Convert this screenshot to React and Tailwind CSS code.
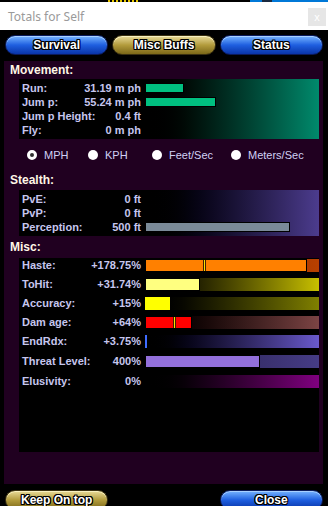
import React from 'react'

const FONT = "font-['Liberation_Sans',Arial,sans-serif]"
const OUTLINE = '[text-shadow:1px_0_0_#000,-1px_0_0_#000,0_1px_0_#000,0_-1px_0_#000,1px_1px_0_#000,-1px_-1px_0_#000,1px_-1px_0_#000,-1px_1px_0_#000]'

function GlossButton({ label, gold }) {
  return (
    <div
      className={`h-[20px] rounded-full border flex items-center justify-center text-[12px] font-bold text-white ${OUTLINE} ${
        gold
          ? 'border-[#3a3010] bg-linear-to-b from-[#eadc98] via-[#b39c3c] to-[#7c6818] shadow-[inset_0_1px_0_#f8f0c0]'
          : 'border-[#0a1a5a] bg-linear-to-b from-[#78b4ff] via-[#1f5fe0] to-[#0a34a8] shadow-[inset_0_1px_0_#a8d0ff]'
      }`}
    >
      {label}
    </div>
  )
}

function Header({ children, h }) {
  return (
    <div className={`pl-[6px] text-[12px] font-bold text-[#fff6e6] ${h}`}>{children}</div>
  )
}

function Radio({ label, checked, w }) {
  return (
    <div className={`flex items-center gap-[7px] ${w}`}>
      {checked ? (
        <span className="w-[10px] h-[10px] rounded-full border-[3px] border-white bg-[#303030]" />
      ) : (
        <span className="w-[10px] h-[10px] rounded-full bg-white" />
      )}
      <span className="text-[11px] text-[#d0d0f4]">{label}</span>
    </div>
  )
}

function Labels({ rows, rowH }) {
  return rows.map((r) => (
    <div key={r[0]} className={`flex items-center justify-between ${rowH}`}>
      <span>{r[0]}</span>
      <span>{r[1]}</span>
    </div>
  ))
}

const movement = [
  ['Run:', '31.19 m ph', 39],
  ['Jum p:', '55.24 m ph', 71],
  ['Jum p Height:', '0.4 ft', 0],
  ['Fly:', '0 m ph', 0],
]

const stealth = [
  ['PvE:', '0 ft', 0],
  ['PvP:', '0 ft', 0],
  ['Perception:', '500 ft', 145],
]

const misc = [
  { l: 'Haste:', v: '+178.75%', w: 162, bar: 'bg-[#ff8000]', track: 'to-[#b84000] from-[#601800]', border: true, mark: 58, mt: '' },
  { l: 'ToHit:', v: '+31.74%', w: 55, bar: 'bg-[#ffff80]', track: 'from-black to-[#c8c000]', border: true, mt: '' },
  { l: 'Accuracy:', v: '+15%', w: 25, bar: 'bg-[#ffff00]', track: 'from-black to-[#808000]', border: false, mt: '' },
  { l: 'Dam age:', v: '+64%', w: 47, bar: 'bg-[#ff0000]', track: 'from-black to-[#7c4444]', border: true, mark: 28, mt: '' },
  { l: 'EndRdx:', v: '+3.75%', w: 2, bar: 'bg-[#3f6cff]', track: 'from-black to-[#6a5acd]', border: false, mt: '' },
  { l: 'Threat Level:', v: '400%', w: 115, bar: 'bg-[#9370db]', track: 'from-[#201a40] to-[#463c86]', border: true, mt: 'mt-[1px]' },
  { l: 'Elusivity:', v: '0%', w: 0, bar: '', track: 'from-black to-[#800080]', border: false, mt: 'mt-[1px]' },
]

export default function App() {
  return (
    <div className={`w-[328px] h-[506px] bg-black overflow-hidden ${FONT}`}>
      <div className="h-[2px] flex">
        <div className="w-[108px]" />
        <div className="w-[32px] bg-[repeating-linear-gradient(90deg,#e8c800_0_2px,#000_2px_4px)]" />
        <div className="w-[110px]" />
        <div className="w-[12px] bg-[#0078d7]" />
        <div className="w-[10px] bg-[#1a2a40]" />
        <div className="flex-1 bg-[#0078d7]" />
      </div>

      <div className="h-[28px] bg-white flex items-start justify-between">
        <span className="pl-[8px] pt-[6px] text-[12px] text-[#9a9a9a] font-['Noto_Sans',sans-serif]">Totals for Self</span>
        <div className="mt-[6px] mr-[2px] w-[18px] h-[18px] bg-[#e6e6e6] flex items-center justify-center text-[11px] leading-none text-white">
          x
        </div>
      </div>

      <div className="grid grid-cols-3 gap-[4px] px-[5px] pt-[5px]">
        <GlossButton label="Survival" />
        <GlossButton label="Misc Buffs" gold />
        <GlossButton label="Status" />
      </div>

      <div className="mt-[6px] ml-[4px] w-[319px] h-[423px] bg-[#200020]">
        <Header h="h-[18px] leading-[18px]">Movement:</Header>
        <div className="ml-[15px] w-[300px] h-[60px] bg-black flex text-[11px] font-bold text-[#c6c6ee]">
          <div className="w-[126px] pl-[3px] pr-[4px] py-[2px]">
            <Labels rows={movement} rowH="h-[14px]" />
          </div>
          <div className="flex-1 py-[2px] bg-linear-to-r from-black to-[#008a6c]">
            {movement.map((r) => (
              <div key={r[0]} className="h-[14px] flex items-center">
                {r[2] > 0 && (
                  <div className="h-[10px] bg-[#00c080] border border-black" style={{ width: r[2] }} />
                )}
              </div>
            ))}
          </div>
        </div>

        <div className="h-[32px] flex items-center pl-[23px]">
          <Radio label="MPH" checked w="w-[61px]" />
          <Radio label="KPH" w="w-[64px]" />
          <Radio label="Feet/Sec" w="w-[79px]" />
          <Radio label="Meters/Sec" />
        </div>

        <Header h="h-[19px] leading-[19px]">Stealth:</Header>
        <div className="ml-[15px] w-[300px] h-[46px] bg-black flex text-[11px] font-bold text-[#c6c6ee]">
          <div className="w-[126px] pl-[3px] pr-[4px] py-[2px]">
            <Labels rows={stealth} rowH="h-[14px]" />
          </div>
          <div className="flex-1 py-[2px] bg-linear-to-r from-black to-[#4c3c8e]">
            {stealth.map((r) => (
              <div key={r[0]} className="h-[14px] flex items-center">
                {r[2] > 0 && (
                  <div className="h-[10px] bg-[#7a8a98] border border-black" style={{ width: r[2] }} />
                )}
              </div>
            ))}
          </div>
        </div>

        <Header h="h-[22px] leading-[22px]">Misc:</Header>
        <div className="ml-[15px] w-[300px] h-[194px] bg-black pt-[1px] flex flex-col gap-[6px] text-[11px] font-bold text-[#c6c6ee]">
          {misc.map((m) => (
            <div key={m.l} className={`flex items-center h-[13px] ${m.mt}`}>
              <div className="w-[126px] pl-[3px] pr-[4px] flex justify-between">
                <span>{m.l}</span>
                <span>{m.v}</span>
              </div>
              <div className={`relative h-[13px] w-[174px] bg-linear-to-r ${m.track}`}>
                {m.w > 0 && (
                  <div
                    className={`h-full ${m.bar} ${m.border ? 'border border-black' : ''}`}
                    style={{ width: m.w }}
                  />
                )}
                {m.mark && (
                  <div
                    className="absolute top-[1px] bottom-[1px] w-[3px] bg-[#ffe000] border-x border-[#402000]"
                    style={{ left: m.mark }}
                  />
                )}
              </div>
            </div>
          ))}
        </div>
      </div>

      <div className="grid grid-cols-3 gap-[4px] px-[5px] mt-[6px]">
        <GlossButton label="Keep On top" gold />
        <div />
        <GlossButton label="Close" />
      </div>
    </div>
  )
}
